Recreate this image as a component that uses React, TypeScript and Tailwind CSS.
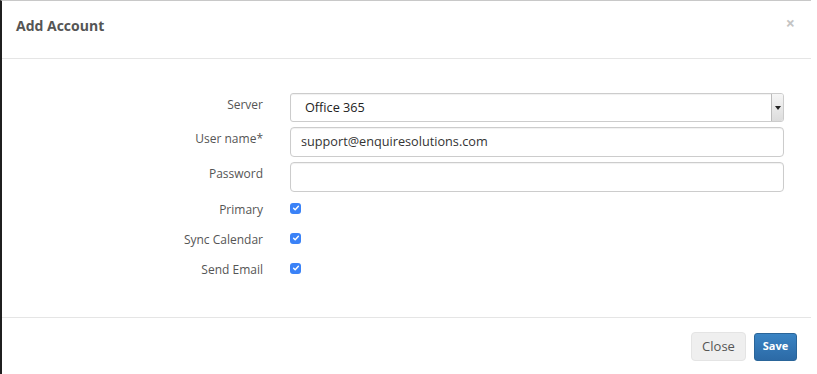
import React from "react";

const Check = () => (
  <span className="flex h-[11px] w-[11px] items-center justify-center rounded-[3px] bg-[#3a82f7]">
    <svg width="8" height="8" viewBox="0 0 8 8" fill="none">
      <path d="M1.6 4.2 L3.2 5.8 L6.4 2.2" stroke="white" strokeWidth="1.4" strokeLinecap="round" strokeLinejoin="round" />
    </svg>
  </span>
);

const App = () => {
  const checks = ["Primary", "Sync Calendar", "Send Email"];
  return (
    <div className="h-[374px] w-[817px] bg-white font-['Open_Sans',sans-serif] text-[#555]">
      <div className="flex h-full w-[811px] flex-col border-l-2 border-t border-l-[#1f1f1f] border-t-[#c8c8c8]">
        <div className="flex h-[58px] items-start justify-between border-b border-[#e5e5e5] pl-[14px] pr-[16px] pt-[15px]">
          <h4 className="text-[14px] font-bold leading-[20px] text-[#555]">Add Account</h4>
          <span className="text-[16px] font-bold leading-[14px] text-[#c4c4c4]">×</span>
        </div>

        <div className="flex-1 pt-[34px]">
          <div className="grid grid-cols-[261px_1fr] gap-x-[27px] gap-y-[5px] pr-[27px] text-[12px]">
            <label className="flex h-[29px] items-center justify-end pb-[6px]">Server</label>
            <div className="flex h-[29px] items-center justify-between rounded-[3px] border border-[#ccc] pl-[14px] text-[12.7px] text-[#222] shadow-[inset_0_1px_1px_rgba(0,0,0,0.06)]">
              <span>Office 365</span>
              <span className="flex h-[27px] w-[12px] items-center justify-center rounded-r-[2px] border-l border-[#bbb] bg-gradient-to-b from-[#f6f6f6] to-[#dcdcdc]">
                <svg width="6" height="4" viewBox="0 0 6 4">
                  <path d="M0 0 H6 L3 4 Z" fill="#222" />
                </svg>
              </span>
            </div>

            <label className="flex h-[30px] items-center justify-end pb-[6px]">User name*</label>
            <div className="flex h-[30px] items-center rounded-[4px] border border-[#ccc] pl-[10px] text-[12.7px] text-[#333] shadow-[inset_0_1px_1px_rgba(0,0,0,0.06)]">
              support@enquiresolutions.com
            </div>

            <label className="flex h-[30px] items-center justify-end pb-[6px]">Password</label>
            <div className="h-[30px] rounded-[4px] border border-[#ccc] shadow-[inset_0_1px_1px_rgba(0,0,0,0.06)]" />
          </div>

          <div className="mt-[2px] grid grid-cols-[261px_1fr] gap-x-[27px] text-[12px]">
            {checks.map((c) => (
              <React.Fragment key={c}>
                <label className="flex h-[30px] items-center justify-end pt-[2px]">{c}</label>
                <div className="flex h-[30px] items-center pb-[2px]">
                  <Check />
                </div>
              </React.Fragment>
            ))}
          </div>
        </div>

        <div className="flex h-[57px] items-center justify-end gap-[8px] border-t border-[#e5e5e5] pr-[14px] pt-[1px]">
          <button className="h-[29px] w-[55px] rounded-[4px] border border-[#e4e4e4] bg-[#efefef] text-[13px] text-[#555]">
            Close
          </button>
          <button className="h-[28px] w-[43px] rounded-[3px] border border-[#2a6599] bg-gradient-to-b from-[#3a84c4] to-[#2c6aa6] text-[11px] font-bold text-white">
            Save
          </button>
        </div>
      </div>
    </div>
  );
};

export default App;
